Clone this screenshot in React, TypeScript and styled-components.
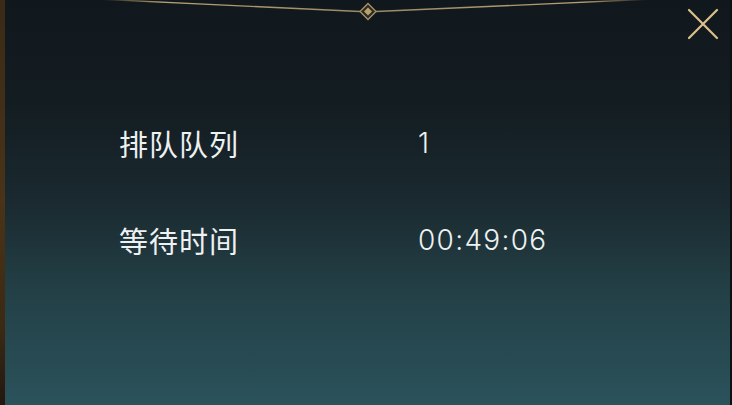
import React from "react";
import styled, { createGlobalStyle } from "styled-components";

const GlobalStyle = createGlobalStyle`
  html, body {
    margin: 0;
    padding: 0;
    width: 732px;
    height: 405px;
    overflow: hidden;
    background: #0f161a;
  }
  #root {
    height: 100%;
  }
`;

const Frame = styled.div`
  display: flex;
  width: 732px;
  height: 405px;
`;

const LeftEdge = styled.div`
  width: 5px;
  background: linear-gradient(180deg, #3a2a16 0%, #4a3318 50%, #3d2a14 80%, #221810 100%);
`;

const RightEdge = styled.div`
  width: 2px;
  background: #0c1114;
`;

const Panel = styled.div`
  position: relative;
  flex: 1;
  background: linear-gradient(
    180deg,
    #11181d 0%,
    #131c21 25%,
    #1a2a30 50%,
    #234046 72%,
    #2b525b 100%
  );
  overflow: hidden;
`;

const Ornament = styled.svg`
  position: absolute;
  top: 0;
  left: 0;
  pointer-events: none;
`;

const CloseButton = styled.button`
  position: absolute;
  top: 6px;
  right: 9px;
  width: 36px;
  height: 36px;
  padding: 0;
  border: none;
  background: none;
  cursor: pointer;
  display: flex;
  align-items: center;
  justify-content: center;
`;

const InfoGrid = styled.div`
  display: grid;
  grid-template-columns: 299px auto;
  grid-auto-rows: 40px;
  row-gap: 57px;
  padding: 123px 0 0 114px;
`;

const Label = styled.div`
  font-family: "Noto Sans CJK SC", "Noto Sans", sans-serif;
  font-size: 29px;
  line-height: 40px;
  letter-spacing: 1px;
  color: #eef1f1;
`;

const Value = styled.div`
  font-family: Inter, "Noto Sans", sans-serif;
  font-size: 28px;
  font-weight: 300;
  line-height: 40px;
  letter-spacing: 1.3px;
  color: #eef1f1;
`;

const rows = [
  { label: "排队队列", value: "1" },
  { label: "等待时间", value: "00:49:06" },
];

const App: React.FC = () => {
  return (
    <>
      <GlobalStyle />
      <Frame>
        <LeftEdge />
        <Panel>
          <Ornament width="725" height="26" viewBox="0 0 725 26">
            <defs>
              <linearGradient id="lineL" x1="0" x2="1" y1="0" y2="0">
                <stop offset="0" stopColor="#a88f5c" stopOpacity="0" />
                <stop offset="0.25" stopColor="#c7ae78" stopOpacity="0.9" />
                <stop offset="1" stopColor="#9a8a66" />
              </linearGradient>
              <linearGradient id="lineR" x1="0" x2="1" y1="0" y2="0">
                <stop offset="0" stopColor="#9a8a66" />
                <stop offset="0.75" stopColor="#c7ae78" stopOpacity="0.9" />
                <stop offset="1" stopColor="#a88f5c" stopOpacity="0" />
              </linearGradient>
            </defs>
            <line x1="90" y1="-1" x2="355" y2="11.5" stroke="url(#lineL)" strokeWidth="1.4" />
            <line x1="371" y1="11.5" x2="650" y2="-1" stroke="url(#lineR)" strokeWidth="1.4" />
            <path d="M363 3.5 L371 11.5 L363 19.5 L355 11.5 Z" fill="#2c2b22" stroke="#a8946a" strokeWidth="1.3" />
            <path d="M363 7.5 L367 11.5 L363 15.5 L359 11.5 Z" fill="#b9a270" />
          </Ornament>
          <CloseButton aria-label="关闭">
            <svg width="34" height="34" viewBox="0 0 34 34">
              <path d="M3 3 L31 31 M31 3 L3 31" stroke="#dcc28a" strokeWidth="2.2" strokeLinecap="round" />
            </svg>
          </CloseButton>
          <InfoGrid>
            {rows.map((r) => (
              <React.Fragment key={r.label}>
                <Label>{r.label}</Label>
                <Value>{r.value}</Value>
              </React.Fragment>
            ))}
          </InfoGrid>
        </Panel>
        <RightEdge />
      </Frame>
    </>
  );
};

export default App;
